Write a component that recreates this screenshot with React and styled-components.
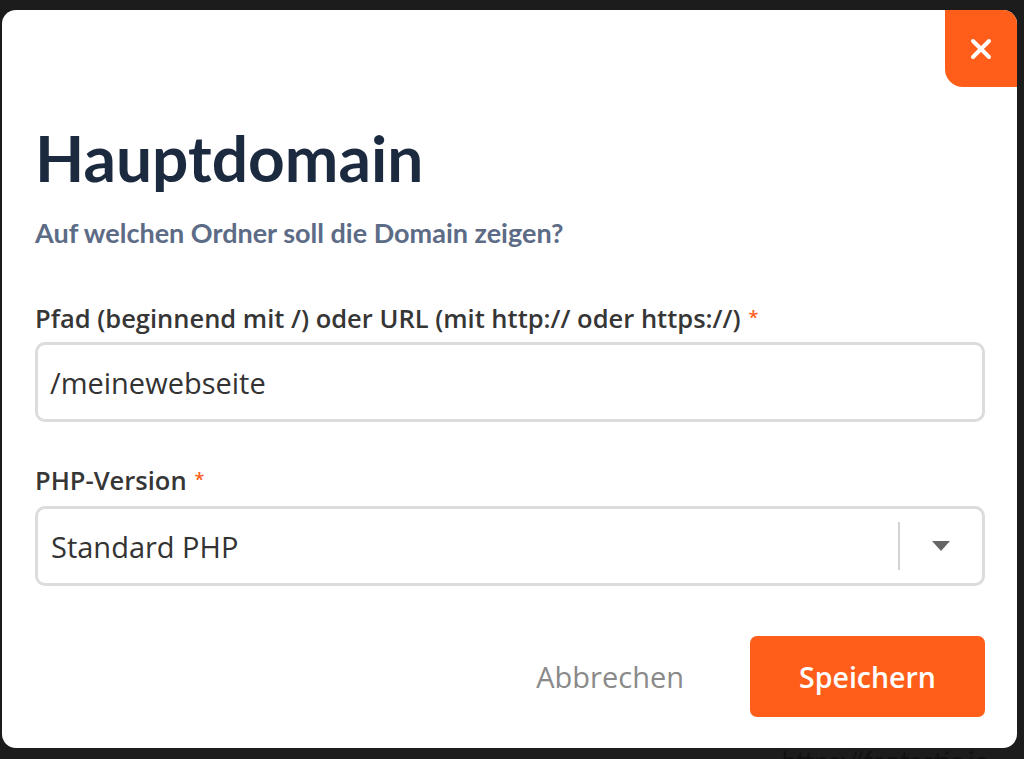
import React from 'react';
import styled, { createGlobalStyle } from 'styled-components';

const orange = '#ff5e1a';
const bodyFont = '"Open Sans", "Noto Sans", "Liberation Sans", sans-serif';

const GlobalStyle = createGlobalStyle`
	html, body {
		margin: 0;
		padding: 0;
		background: #1c1c1c;
		height: 759px;
		overflow: hidden;
	}
	body {
		font-family: Lato, "Noto Sans", "Liberation Sans", sans-serif;
	}
	* { box-sizing: border-box; }
`;

const Page = styled.div`
	padding: 10px 7px 0 2px;
`;

const Modal = styled.div`
	position: relative;
	background: #fff;
	border-radius: 14px;
	height: 738px;
	padding: 110px 32px 0 33px;
	display: flex;
	flex-direction: column;
`;

const CloseButton = styled.button`
	position: absolute;
	top: 0;
	right: 0;
	width: 72px;
	height: 77px;
	border: none;
	padding: 0;
	background: ${orange};
	border-radius: 0 14px 0 18px;
	display: flex;
	align-items: center;
	justify-content: center;
	cursor: pointer;
`;

const Title = styled.h1`
	margin: 0;
	font-size: 64px;
	line-height: 1.2;
	font-weight: 700;
	color: #1b2a3f;
`;

const Subtitle = styled.p`
	margin: 20px 0 0;
	font-size: 27px;
	line-height: 1.2;
	font-weight: 700;
	color: #5c6b86;
`;

const Field = styled.div`
	margin-top: ${p => p.$gap}px;
	display: flex;
	flex-direction: column;
`;

const Label = styled.label`
	font-family: ${bodyFont};
	font-size: 25.5px;
	line-height: 28px;
	font-weight: 600;
	color: #363636;
	margin-bottom: ${p => p.$space || 10}px;
`;

const Required = styled.span`
	color: ${orange};
	font-size: 18px;
	vertical-align: 4px;
	margin-left: 8px;
`;

const Input = styled.input`
	height: 80px;
	border: 3px solid #dcdcdc;
	border-radius: 10px;
	padding: 0 12px;
	font-family: ${bodyFont};
	font-size: 29px;
	color: #333;
	outline: none;
`;

const Select = styled.div`
	height: 80px;
	border: 3px solid #dcdcdc;
	border-radius: 10px;
	display: flex;
	align-items: center;
	padding-left: 13px;
	font-family: ${bodyFont};
	font-size: 29px;
	color: #333;
`;

const SelectValue = styled.div`
	flex: 1;
`;

const Separator = styled.div`
	width: 2px;
	height: 48px;
	background: #d4d4d4;
`;

const Arrow = styled.div`
	width: 82px;
	display: flex;
	justify-content: center;
	&::after {
		content: '';
		border-left: 9px solid transparent;
		border-right: 9px solid transparent;
		border-top: 10px solid #666;
	}
`;

const Footer = styled.div`
	margin-top: 50px;
	display: flex;
	justify-content: flex-end;
	align-items: center;
	gap: 36px;
`;

const TextButton = styled.button`
	background: none;
	border: none;
	font-family: ${bodyFont};
	font-size: 29px;
	color: #8a8a8a;
	padding: 0 30px;
	height: 81px;
	cursor: pointer;
`;

const PrimaryButton = styled.button`
	width: 235px;
	height: 81px;
	background: ${orange};
	border: none;
	border-radius: 7px;
	font-family: ${bodyFont};
	font-size: 28.5px;
	font-weight: 600;
	color: #fff;
	cursor: pointer;
`;

const Behind = styled.div`
	padding-left: 780px;
	font-size: 26px;
	color: #111;
	line-height: 1;
	white-space: nowrap;
`;

const App = () => (
	<Page>
		<GlobalStyle />
		<Modal>
			<CloseButton aria-label="Schließen">
				<svg width="22" height="22" viewBox="0 0 22 22">
					<path d="M3 3 L19 19 M19 3 L3 19" stroke="#fff" strokeWidth="4" strokeLinecap="round" />
				</svg>
			</CloseButton>
			<Title>Hauptdomain</Title>
			<Subtitle>Auf welchen Ordner soll die Domain zeigen?</Subtitle>
			<Field $gap={54}>
				<Label>
					Pfad (beginnend mit /) oder URL (mit http:// oder https://)
					<Required>*</Required>
				</Label>
				<Input defaultValue="/meinewebseite" />
			</Field>
			<Field $gap={43}>
				<Label $space={12}>
					PHP-Version
					<Required>*</Required>
				</Label>
				<Select>
					<SelectValue>Standard PHP</SelectValue>
					<Separator />
					<Arrow />
				</Select>
			</Field>
			<Footer>
				<TextButton>Abbrechen</TextButton>
				<PrimaryButton>Speichern</PrimaryButton>
			</Footer>
		</Modal>
		<Behind>https://fantastic.io</Behind>
	</Page>
);

export default App;
